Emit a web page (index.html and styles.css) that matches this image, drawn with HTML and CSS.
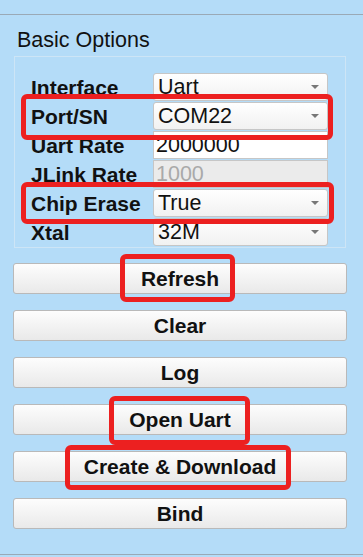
FILE: index.html
```html
<!DOCTYPE html>
<html lang="en">
<head>
<meta charset="UTF-8">
<meta name="viewport" content="width=device-width, initial-scale=1.0">
<title>Download Options</title>
<link rel="stylesheet" href="styles.css">
</head>
<body>

<div class="page">
  <div class="top-rule"></div>

  <div class="panel">
    <div class="section-title">Basic Options</div>

    <div class="options">
      <div class="opt-label">Interface</div>
      <div class="select-wrap">
        <select class="opt-select"><option>Uart</option></select>
      </div>

      <div class="opt-label">Port/SN</div>
      <div class="select-wrap">
        <select class="opt-select"><option>COM22</option></select>
      </div>

      <div class="opt-label">Uart Rate</div>
      <input class="opt-input" type="text" value="2000000">

      <div class="opt-label">JLink Rate</div>
      <input class="opt-input" type="text" value="1000" disabled>

      <div class="opt-label">Chip Erase</div>
      <div class="select-wrap">
        <select class="opt-select"><option>True</option></select>
      </div>

      <div class="opt-label">Xtal</div>
      <div class="select-wrap">
        <select class="opt-select"><option>32M</option></select>
      </div>
    </div>

    <div class="actions">
      <button class="action-btn">Refresh</button>
      <button class="action-btn">Clear</button>
      <button class="action-btn">Log</button>
      <button class="action-btn">Open Uart</button>
      <button class="action-btn">Create &amp; Download</button>
      <button class="action-btn">Bind</button>
    </div>
  </div>

  <div class="bottom-rule"></div>

  <!-- red annotation boxes drawn over the screenshot -->
  <div class="mark mark-port"></div>
  <div class="mark mark-erase"></div>
  <div class="mark mark-refresh"></div>
  <div class="mark mark-open"></div>
  <div class="mark mark-create"></div>
</div>

</body>
</html>
```
FILE: styles.css
```css
html, body {
  margin: 0;
  padding: 0;
  background: #b4dcf8;
}

.page {
  position: relative;
  width: 363px;
  height: 557px;
  overflow: hidden;
  font-family: "Liberation Sans", Arial, sans-serif;
  color: #111;
}

.top-rule {
  height: 14px;
  border-bottom: 1px solid #9aa9b6;
}

.panel {
  padding: 13px 16px 0 13px;
}

.section-title {
  font-size: 21.5px;
  line-height: 24px;
  height: 24px;
  padding-left: 4px;
}

/* options box */
.options {
  margin: 4px 1px 0 1px;
  border: 1px solid #cde5f6;
  padding: 16px 17px 0 16px;
  display: grid;
  grid-template-columns: 122px 1fr;
  grid-auto-rows: 29px;
}

.opt-label {
  font-size: 21px;
  font-weight: bold;
  line-height: 29px;
  white-space: nowrap;
}

.select-wrap {
  position: relative;
  height: 28px;
}

.select-wrap::after {
  content: "";
  position: absolute;
  right: 9px;
  top: 12px;
  border-left: 4px solid transparent;
  border-right: 4px solid transparent;
  border-top: 4px solid #777;
  pointer-events: none;
}

.opt-select,
.opt-input {
  -webkit-appearance: none;
  appearance: none;
  box-sizing: border-box;
  width: 100%;
  height: 28px;
  margin: 0;
  padding: 0 4px;
  font-family: "Liberation Sans", Arial, sans-serif;
  font-size: 21.5px;
  color: #111;
  border: 1px solid #c6c6c6;
  border-radius: 3px;
  outline: none;
}

.opt-select {
  background: linear-gradient(#ffffff, #f1f1f1);
}

.opt-input {
  background: #fff;
  border-radius: 0;
  padding: 0 2px;
}

.opt-input:disabled {
  background: #ebebeb;
  color: #a9a9a9;
}

/* buttons */
.actions {
  display: flex;
  flex-direction: column;
  gap: 16px;
  margin-top: 15px;
}

.action-btn {
  height: 31px;
  padding: 0;
  font-family: "Liberation Sans", Arial, sans-serif;
  font-size: 21px;
  font-weight: bold;
  color: #111;
  background: linear-gradient(#fdfdfd, #e9e9e9);
  border: 1px solid #b9b9b9;
  border-radius: 3px;
}

.bottom-rule {
  margin-top: 25px;
  border-top: 1px solid #9aa9b6;
}

/* annotation highlights */
.mark {
  position: absolute;
  box-sizing: border-box;
  border: 5px solid #ec2020;
  border-radius: 6px;
}

.mark-port {
  left: 21px;
  top: 94px;
  width: 312px;
  height: 46px;
}

.mark-erase {
  left: 21px;
  top: 182px;
  width: 313px;
  height: 42px;
}

.mark-refresh {
  left: 120px;
  top: 254px;
  width: 115px;
  height: 48px;
}

.mark-open {
  left: 109px;
  top: 396px;
  width: 141px;
  height: 49px;
}

.mark-create {
  left: 65px;
  top: 445px;
  width: 226px;
  height: 45px;
}
```
